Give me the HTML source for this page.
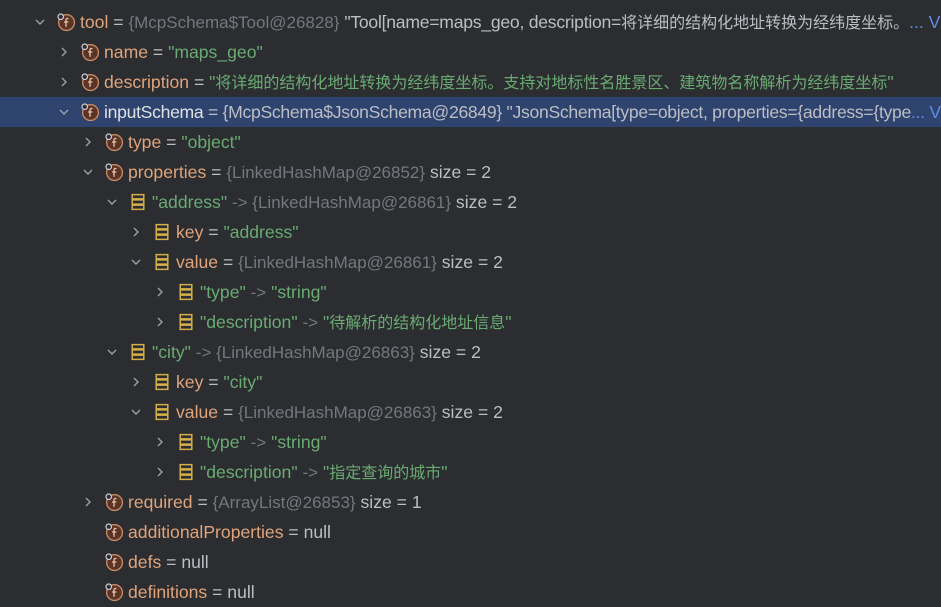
<!DOCTYPE html>
<html><head><meta charset="utf-8"><style>
body{margin:0;width:941px;height:606px;background:#2b2d30;overflow:hidden;font-family:"Liberation Sans","Noto Sans CJK SC",sans-serif;font-size:17.6px;color:#bcbec4;position:relative}
.r{position:absolute;left:0;right:0;height:30px;line-height:30px;white-space:nowrap}
.sel{background:#2e436e}
.a{position:absolute;top:9px;width:12px;height:12px}
.i{position:absolute;top:5px;width:20px;height:20px}
.t{position:absolute;top:0}
.n{color:#e0a47c}
.s{color:#6aab73}
.g{color:#74777d;font-size:17px}
.b{color:#5f8de0}
.z{font-size:16px}
</style></head><body>
<svg width="0" height="0" style="position:absolute"><defs>
<symbol id="f" viewBox="0 0 19 19"><circle cx="10" cy="10" r="7.5" fill="#5a3426" stroke="#c98a64" stroke-width="1.3"/><path d="M11.8 6.3c-1.3-.5-2.3 0-2.3 1.4V14M7.6 9.5h4.2" stroke="#e8c0a4" stroke-width="1.3" fill="none"/><circle cx="4.5" cy="4.5" r="2.6" fill="#2b2d30" stroke="#cfd1d6" stroke-width="1.1"/></symbol>
<symbol id="m" viewBox="0 0 19 19"><rect x="4" y="2.5" width="11" height="4" fill="none" stroke="#d6b048" stroke-width="1.4"/><rect x="4" y="7.5" width="11" height="4" fill="none" stroke="#d6b048" stroke-width="1.4"/><rect x="4" y="12.5" width="11" height="4" fill="none" stroke="#d6b048" stroke-width="1.4"/></symbol>
<symbol id="c" viewBox="0 0 12 12"><path d="M2 4l4 4 4-4" fill="none" stroke="#9da0a8" stroke-width="1.4"/></symbol>
<symbol id="e" viewBox="0 0 12 12"><path d="M4 2l4 4-4 4" fill="none" stroke="#9da0a8" stroke-width="1.4"/></symbol>
</defs></svg>

<div class="r" style="top:7px"><svg class="a" style="left:34px"><use href="#c"/></svg><svg class="i" style="left:56px"><use href="#f"/></svg><span class="t" style="left:80px"><span class="n">tool</span> = <span class="g">{McpSchema$Tool@26828}</span> <span style="letter-spacing:-0.25px">"Tool[name=maps_geo, description=</span><span class="z">将详细的结构化地址转换为经纬度坐标。</span><span class="b">... Vi</span></span></div>
<div class="r" style="top:37px"><svg class="a" style="left:58px"><use href="#e"/></svg><svg class="i" style="left:80px"><use href="#f"/></svg><span class="t" style="left:104px"><span class="n">name</span> = <span class="s">"maps_geo"</span></span></div>
<div class="r" style="top:67px"><svg class="a" style="left:58px"><use href="#e"/></svg><svg class="i" style="left:80px"><use href="#f"/></svg><span class="t" style="left:104px"><span class="n">description</span> = <span class="s">"<span class="z">将详细的结构化地址转换为经纬度坐标。支持对地标性名胜景区、建筑物名称解析为经纬度坐标</span>"</span></span></div>
<div class="r sel" style="top:97px"><svg class="a" style="left:58px"><use href="#c"/></svg><svg class="i" style="left:80px"><use href="#f"/></svg><span class="t" style="left:104px;letter-spacing:-0.3px"><span class="n" style="color:#dfe1e5">inputSchema</span> = {McpSchema$JsonSchema@26849} "JsonSchema[type=object, properties={address={type<span class="b">... Vi</span></span></div>
<div class="r" style="top:127px"><svg class="a" style="left:82px"><use href="#e"/></svg><svg class="i" style="left:104px"><use href="#f"/></svg><span class="t" style="left:128px"><span class="n">type</span> = <span class="s">"object"</span></span></div>
<div class="r" style="top:157px"><svg class="a" style="left:82px"><use href="#c"/></svg><svg class="i" style="left:104px"><use href="#f"/></svg><span class="t" style="left:128px"><span class="n">properties</span> = <span class="g">{LinkedHashMap@26852}</span>  size = 2</span></div>
<div class="r" style="top:187px"><svg class="a" style="left:106px"><use href="#c"/></svg><svg class="i" style="left:128px"><use href="#m"/></svg><span class="t" style="left:152px"><span class="s">"address"</span> <span class="g">-&gt; {LinkedHashMap@26861}</span>  size = 2</span></div>
<div class="r" style="top:217px"><svg class="a" style="left:130px"><use href="#e"/></svg><svg class="i" style="left:152px"><use href="#m"/></svg><span class="t" style="left:176px"><span class="n">key</span> = <span class="s">"address"</span></span></div>
<div class="r" style="top:247px"><svg class="a" style="left:130px"><use href="#c"/></svg><svg class="i" style="left:152px"><use href="#m"/></svg><span class="t" style="left:176px"><span class="n">value</span> = <span class="g">{LinkedHashMap@26861}</span>  size = 2</span></div>
<div class="r" style="top:277px"><svg class="a" style="left:154px"><use href="#e"/></svg><svg class="i" style="left:176px"><use href="#m"/></svg><span class="t" style="left:200px"><span class="s">"type"</span> <span class="g">-&gt;</span> <span class="s">"string"</span></span></div>
<div class="r" style="top:307px"><svg class="a" style="left:154px"><use href="#e"/></svg><svg class="i" style="left:176px"><use href="#m"/></svg><span class="t" style="left:200px"><span class="s">"description"</span> <span class="g">-&gt;</span> <span class="s">"<span class="z">待解析的结构化地址信息</span>"</span></span></div>
<div class="r" style="top:337px"><svg class="a" style="left:106px"><use href="#c"/></svg><svg class="i" style="left:128px"><use href="#m"/></svg><span class="t" style="left:152px"><span class="s">"city"</span> <span class="g">-&gt; {LinkedHashMap@26863}</span>  size = 2</span></div>
<div class="r" style="top:367px"><svg class="a" style="left:130px"><use href="#e"/></svg><svg class="i" style="left:152px"><use href="#m"/></svg><span class="t" style="left:176px"><span class="n">key</span> = <span class="s">"city"</span></span></div>
<div class="r" style="top:397px"><svg class="a" style="left:130px"><use href="#c"/></svg><svg class="i" style="left:152px"><use href="#m"/></svg><span class="t" style="left:176px"><span class="n">value</span> = <span class="g">{LinkedHashMap@26863}</span>  size = 2</span></div>
<div class="r" style="top:427px"><svg class="a" style="left:154px"><use href="#e"/></svg><svg class="i" style="left:176px"><use href="#m"/></svg><span class="t" style="left:200px"><span class="s">"type"</span> <span class="g">-&gt;</span> <span class="s">"string"</span></span></div>
<div class="r" style="top:457px"><svg class="a" style="left:154px"><use href="#e"/></svg><svg class="i" style="left:176px"><use href="#m"/></svg><span class="t" style="left:200px"><span class="s">"description"</span> <span class="g">-&gt;</span> <span class="s">"<span class="z">指定查询的城市</span>"</span></span></div>
<div class="r" style="top:487px"><svg class="a" style="left:82px"><use href="#e"/></svg><svg class="i" style="left:104px"><use href="#f"/></svg><span class="t" style="left:128px"><span class="n">required</span> = <span class="g">{ArrayList@26853}</span>  size = 1</span></div>
<div class="r" style="top:517px"><svg class="i" style="left:104px"><use href="#f"/></svg><span class="t" style="left:128px"><span class="n">additionalProperties</span> = null</span></div>
<div class="r" style="top:547px"><svg class="i" style="left:104px"><use href="#f"/></svg><span class="t" style="left:128px"><span class="n">defs</span> = null</span></div>
<div class="r" style="top:577px"><svg class="i" style="left:104px"><use href="#f"/></svg><span class="t" style="left:128px"><span class="n">definitions</span> = null</span></div>
</body></html>
